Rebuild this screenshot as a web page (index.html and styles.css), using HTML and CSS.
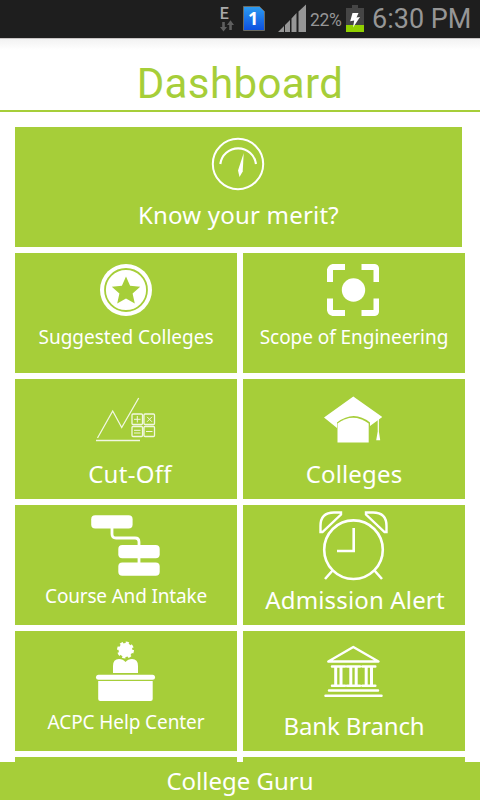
FILE: index.html
```html
<!DOCTYPE html>
<html lang="en">
<head>
<meta charset="utf-8">
<title>Dashboard</title>
<link rel="stylesheet" href="styles.css">
</head>
<body>
<div class="screen">
  <div class="status">
    <svg class="signals" width="92" height="38" viewBox="216 0 92 38">
      <defs><linearGradient id="sim" x1="0" y1="0" x2="0" y2="1"><stop offset="0" stop-color="#2d9cf0"/><stop offset="1" stop-color="#0c4fe0"/></linearGradient></defs>
      <text class="edge" x="219.8" y="18.7">E</text>
      <path d="M222.2 22h2.6v5h2.2l-3.5 4.500-3.500-4.500h2.200zM229.200 30h2.600v-5h2.200l-3.500-4.700-3.500 4.700h2.200z" fill="#5f5f5f"/>
      <path d="M243.500 6.500h16l5 5v19h-21z" fill="url(#sim)" stroke="#6b6b62"/>
      <text class="sim" x="248" y="25">1</text>
      <path d="M278 32l6-6v6zM285 25l5-5v12h-5zM291.500 18.500l5-5.500v19h-5zM298.500 11.500l7.500-7v27.500h-7.500z" fill="#969696"/>
    </svg>
    <span class="percent">22%</span>
    <svg class="battery" width="20" height="38" viewBox="345 0 20 38">
      <path d="M346 8h6V5h6v3h6v17h-18z" fill="#454545"/><path d="M346 25h18v7h-18z" fill="#91d000"/>
      <path d="M352.500 13h6l-2 4.500 3.500-.5-7 10.500 1.200-7-4 .8z" fill="#fff"/>
    </svg>
    <span class="time">6:30 PM</span>
  </div>
  <h1 class="title">Dashboard</h1>
  <div class="grid">
    <div class="tile wide">
      <svg width="447" height="73" viewBox="15 127 447 73" class="line">
        <circle cx="238" cy="164" r="25.200" stroke-width="2"/>
        <path d="M220.300 164a18 18 0 0 1 35.700 0" stroke-width="2.200"/>
        <path class="fill" d="M243.700 153l-5.700 17.500 1.500 6.500 3.200-5.500z"/>
      </svg>
      <span class="label merit">Know your merit?</span>
    </div>
    <div class="tile">
      <svg width="222" height="69" viewBox="15 253 222 69">
        <circle cx="126" cy="290" r="26"/><circle class="cut" cx="126" cy="290" r="21"/>
        <path class="green" d="M126 276.500l4.100 9.300 10.100 1-7.600 6.700 2.200 9.900-8.800-5-8.800 5 2.200-9.900-7.600-6.700 10.100-1z"/>
      </svg>
      <span class="label small suggested">Suggested Colleges</span>
    </div>
    <div class="tile">
      <svg width="222" height="69" viewBox="243 253 222 69">
        <path d="M345 264v6h-12v12h-6v-12.500q1-4.500 5.500-5.500zM361.500 264v6h12v12h5.500v-14q-.5-3.500-4-4zM327 298.500h6v11.500h12v6h-12.500q-4.500-1-5.500-5.500zM379 298.500h-5.500v11.500h-12v6h13.500q3.500-.5 4-4z"/>
        <circle cx="353.500" cy="290" r="11.700"/>
      </svg>
      <span class="label small scope">Scope of Engineering</span>
    </div>
    <div class="tile">
      <svg width="222" height="80" viewBox="15 379 222 80" class="line faint">
        <path d="M97.500 438l15.200-27 9 16.500 17-29.500M96 440.500h44" stroke-width="1.300"/>
        <path d="M133 414h8.500q1 0 1 1v8.500q0 1-1 1h-8.500q-1 0-1-1v-8.500q0-1 1-1zM145 414h8.500q1 0 1 1v8.500q0 1-1 1h-8.500q-1 0-1-1v-8.500q0-1 1-1zM133 426.500h8.500q1 0 1 1v8q0 1-1 1h-8.500q-1 0-1-1v-8q0-1 1-1zM145 426.500h8.500q1 0 1 1v8q0 1-1 1h-8.500q-1 0-1-1v-8q0-1 1-1z" stroke-width="1.300"/>
        <path d="M134 419.300h6.500M137.300 416v6.500M147 416.800l5 5m0-5l-5 5M134 430.300h6.500M134 433h6.500M146 431.500h6.500"/>
      </svg>
      <span class="label cutoff">Cut-Off</span>
    </div>
    <div class="tile">
      <svg width="222" height="80" viewBox="243 379 222 80">
        <path d="M353.300 396.500L382.300 417 370 426v-3.500q-16-13-33 0V428L324 417.500z"/>
        <path d="M337.500 423.500q15.500-11.500 31.200 0v19h-31.200z"/>
        <path d="M377.700 419h1.200v12.500l1.300 8.700h-4l1.500-8.700z"/>
      </svg>
      <span class="label colleges">Colleges</span>
    </div>
    <div class="tile">
      <svg width="222" height="76" viewBox="15 505 222 76">
        <rect x="91.200" y="515.200" width="41.400" height="13.300" rx="4"/><rect x="118.300" y="545" width="41.400" height="13.300" rx="4"/><rect x="118.300" y="562.500" width="41.400" height="13.300" rx="4"/>
        <path class="link" d="M112 527v7q0 4 4 4h19q4 0 4 4v22"/>
      </svg>
      <span class="label small course">Course And Intake</span>
    </div>
    <div class="tile">
      <svg width="222" height="80" viewBox="243 505 222 80" class="line">
        <path d="M353.700 528v23H337M333 570l-8 9M374 570l8 9" stroke-width="2.600"/>
        <circle cx="353.500" cy="549.700" r="29.300" stroke-width="2.600"/>
        <path d="M341 512.500h-7q-13.500 0-13.500 13.500v6h2l18.500-17.500zM366 512.500h7q13.500 0 13.500 13.500v6h-2L366 514.500z" stroke-width="2.400"/>
      </svg>
      <span class="label admission">Admission Alert</span>
    </div>
    <div class="tile">
      <svg width="222" height="76" viewBox="15 631 222 76">
        <circle cx="125.500" cy="650" r="7"/><circle class="gear" cx="125.500" cy="650" r="6.700"/>
        <path d="M113 673v-7q0-7 6-7 4 0 6.500 3 2.500-3 6.500-3 6 0 6 7v7z"/>
        <rect x="96" y="674.700" width="59" height="5" rx="2.500"/><path d="M98.200 681h54.500v18q0 2-2 2h-50.500q-2 0-2-2z"/>
      </svg>
      <span class="label small acpc">ACPC Help Center</span>
    </div>
    <div class="tile">
      <svg width="222" height="80" viewBox="243 631 222 80" class="line">
        <path d="M353.300 647l25.200 14.500h-50.200z" stroke-width="2.400" stroke-linejoin="round"/>
        <path d="M332 666.500h13M347 666.500h13M362.300 666.500h13M332 685.700h13M347 685.700h13M362.300 685.700h13M329 690.500h49M325.500 695.800h56" stroke-width="2.500" stroke-linecap="round"/>
        <path d="M335.700 667v19M341 667v19M350.800 667v19M356.200 667v19M366.200 667v19M371.500 667v19" stroke-width="3"/>
      </svg>
      <span class="label bank">Bank Branch</span>
    </div>
    <div class="tile"></div>
    <div class="tile"></div>
  </div>
  <div class="footer"><span class="label guru">College Guru</span></div>
</div>
</body>
</html>
```
FILE: styles.css
```css
* { box-sizing: border-box; }
body { margin: 0; background: #fff; }
.screen { width: 480px; height: 800px; overflow: hidden; display: flex; flex-direction: column; }
svg { display: block; flex: none; }
.status {
  height: 38px; flex: none; display: flex; padding-left: 216px;
  background: #1e1e1e; color: #969696; font-family: Roboto, sans-serif; white-space: nowrap;
}
.edge { font: 500 16px Roboto, sans-serif; fill: #aaa; }
.sim { font: bold 18px "Noto Sans", sans-serif; fill: #fff; }
.percent { width: 37px; padding-left: 2px; font-size: 17.5px; line-height: 40px; letter-spacing: -.3px; }
.time { padding-left: 7px; font-size: 27px; line-height: 38px; }
.title {
  flex: none; height: 74px; margin: 0; border-bottom: 2px solid #a6ce39;
  font: 400 42px/91px Roboto, sans-serif; letter-spacing: .4px; color: #a6ce39; text-align: center;
  background: linear-gradient(#c8c4c4 0, #c8c4c4 1px, #f2f2f2 1px, #fff 12px);
}
.grid {
  flex: 1; min-height: 0; overflow: hidden; padding: 15px 15px 0;
  display: grid; grid-template-columns: 222px 222px; grid-auto-rows: 120px; gap: 6px;
}
.tile { background: #a6ce39; overflow: hidden; }
.wide { grid-column: 1 / 3; width: 447px; }
.tile svg { fill: #fff; }
.tile .line { fill: none; stroke: #fff; }
.tile .faint { opacity: .85; }
.line .fill { fill: #fff; stroke: none; }
.tile .green { fill: #a6ce39; }
.cut { fill: none; stroke: #a6ce39; stroke-width: 1.8; }
.link { fill: none; stroke: #fff; stroke-width: 2.8; }
.gear { fill: none; stroke: #fff; stroke-width: 3.6; stroke-dasharray: 2.9 2.36; }
.label {
  display: block; color: #fff; text-align: center; white-space: nowrap;
  font-family: "Noto Sans", sans-serif; font-size: 24px; line-height: 30px;
}
.small { font-size: 19px; }
.merit { letter-spacing: .2px; }
.scope { letter-spacing: -.05px; }
.cutoff { padding-left: 8px; letter-spacing: .3px; }
.colleges { letter-spacing: .15px; }
.course { letter-spacing: -.18px; }
.admission { padding-left: 2px; letter-spacing: .15px; }
.acpc { letter-spacing: -.1px; }
.bank { letter-spacing: -.15px; }
.footer { flex: none; height: 38px; padding-top: 4px; background: #a6ce39; }
```
